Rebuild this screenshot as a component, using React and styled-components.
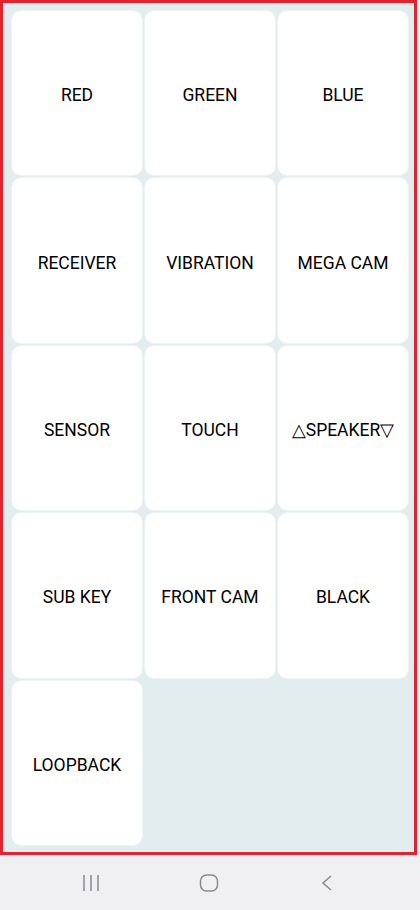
import React from "react";
import styled, { createGlobalStyle } from "styled-components";

const Global = createGlobalStyle`
  html, body { margin: 0; padding: 0; background: #f0f0f2; }
  body { font-family: Roboto, "Noto Sans", sans-serif; }
  * { box-sizing: border-box; }
`;

const Page = styled.div`
  width: 420px;
  height: 910px;
  display: flex;
  flex-direction: column;
  background: #f0f0f2;
`;

const Frame = styled.div`
  width: 417px;
  height: 855px;
  border: 3px solid #e0232e;
  background: #e3ecee;
  padding: 7px 5px 6px 8px;
`;

const Grid = styled.div`
  display: grid;
  grid-template-columns: repeat(3, 1fr);
  grid-template-rows: repeat(5, 1fr);
  gap: 1px;
  height: 100%;
`;

const Tile = styled.button`
  background: #ffffff;
  border: 1px solid #edf2f2;
  border-radius: 10px;
  display: flex;
  align-items: center;
  justify-content: center;
  font-family: Roboto, "Noto Sans", sans-serif;
  font-size: 17.5px;
  color: #000;
  padding: 4px 0 0 0;
  cursor: pointer;
`;

const NavBar = styled.div`
  flex: 1;
  display: flex;
  align-items: center;
  gap: 78px;
  padding-left: 71px;
`;

const NavButton = styled.div`
  width: 40px;
  height: 40px;
  display: flex;
  align-items: center;
  justify-content: center;
`;

const labels = [
  "RED", "GREEN", "BLUE",
  "RECEIVER", "VIBRATION", "MEGA CAM",
  "SENSOR", "TOUCH", "△SPEAKER▽",
  "SUB KEY", "FRONT CAM", "BLACK",
  "LOOPBACK",
];

export default function App() {
  return (
    <Page>
      <Global />
      <Frame>
        <Grid>
          {labels.map((l) => (
            <Tile key={l}>{l}</Tile>
          ))}
        </Grid>
      </Frame>
      <NavBar>
        <NavButton>
          <svg width="20" height="18" viewBox="0 0 20 18" fill="none" stroke="#8a8a8e" strokeWidth="1.5">
            <line x1="3" y1="1" x2="3" y2="17" />
            <line x1="10" y1="1" x2="10" y2="17" />
            <line x1="17" y1="1" x2="17" y2="17" />
          </svg>
        </NavButton>
        <NavButton>
          <svg width="20" height="20" viewBox="0 0 20 20" fill="none" stroke="#8a8a8e" strokeWidth="1.5">
            <rect x="1.5" y="2" width="17" height="16" rx="6" />
          </svg>
        </NavButton>
        <NavButton>
          <svg width="14" height="20" viewBox="0 0 14 20" fill="none" stroke="#8a8a8e" strokeWidth="1.5">
            <polyline points="11,3 3,10 11,17" />
          </svg>
        </NavButton>
      </NavBar>
    </Page>
  );
}
